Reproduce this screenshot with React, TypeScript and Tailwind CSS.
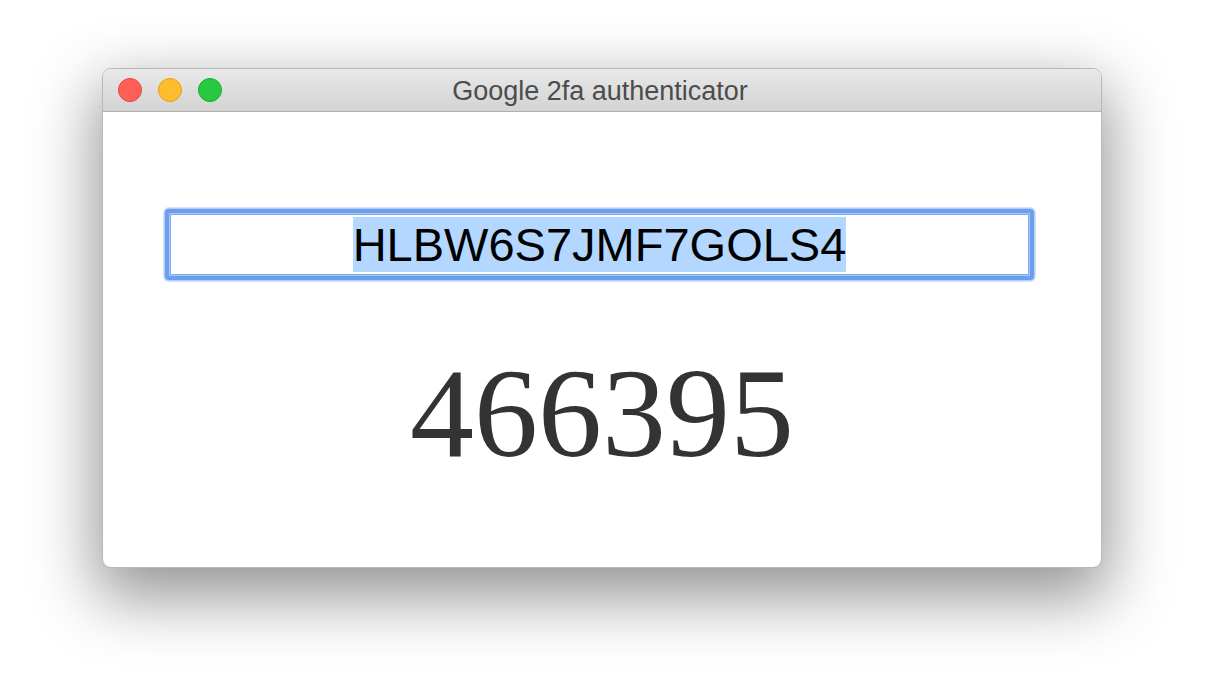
import React from "react";

export default function App() {
  return (
    <div className="w-[1206px] h-[676px] bg-white overflow-hidden pt-[68px] pl-[102px]">
      <div className="w-[1000px] h-[500px] rounded-[9px] bg-white flex flex-col overflow-hidden border border-[#b8b8b8] shadow-[0_24px_64px_6px_rgba(0,0,0,0.42)]">
        {/* Title bar */}
        <div className="relative h-[43px] shrink-0 flex items-center bg-gradient-to-b from-[#e9e9e9] to-[#d3d3d3] border-b border-[#b0b0b0]">
          <div className="flex items-center gap-[16px] pl-[15px]">
            <div className="w-[24px] h-[24px] rounded-full bg-[#fe5f57] border border-[#e2463f]" />
            <div className="w-[24px] h-[24px] rounded-full bg-[#febc2e] border border-[#e1a116]" />
            <div className="w-[24px] h-[24px] rounded-full bg-[#28c840] border border-[#14ae2b]" />
          </div>
          <div className="absolute inset-0 flex items-center justify-center text-[27px] text-[#4c4c4c] font-['Liberation_Sans',Arial,sans-serif] pt-[3px] pr-[4px]">
            Google 2fa authenticator
          </div>
        </div>
        {/* Content */}
        <div className="flex-1 flex flex-col">
          <div className="mt-[95px] ml-[60px] w-[873px] rounded-[6px] bg-[#d3e3f9] p-[1px]">
            <div className="rounded-[5px] bg-[#b4cff6] p-[1px]">
              <div className="rounded-[4px] bg-[#6c9ef0] p-[4px]">
                <div className="bg-[#a9c7f4] p-[1px]">
                  <div className="bg-[#80aaef] p-[1px]">
                    <div className="h-[59px] bg-white flex items-center justify-center">
                      <span className="bg-[#b3d7ff] text-black text-[47px] leading-[55px] font-['Liberation_Sans',Arial,sans-serif]">
                        HLBW6S7JMF7GOLS4
                      </span>
                    </div>
                  </div>
                </div>
              </div>
            </div>
          </div>
          <div className="mt-[67px] flex justify-center text-[128px] leading-[128px] text-[#333333] font-['Liberation_Serif','Times_New_Roman',serif]">
            466395
          </div>
        </div>
      </div>
    </div>
  );
}
